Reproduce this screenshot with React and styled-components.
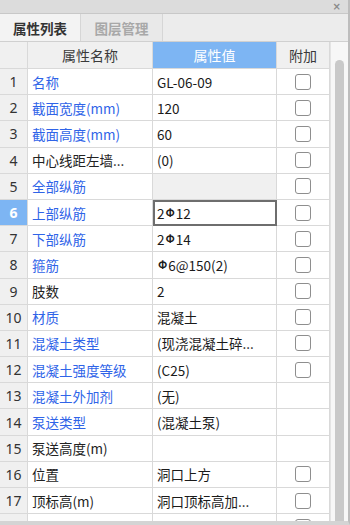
import React from "react";
import styled, { createGlobalStyle } from "styled-components";

const Global = createGlobalStyle`
  html, body { margin: 0; padding: 0; background: #ffffff; }
  body { font-family: "Noto Sans CJK SC", "Noto Sans", sans-serif; }
`;

const Frame = styled.div`
  width: 350px;
  height: 525px;
  display: flex;
  flex-direction: column;
  overflow: hidden;
  background: #ffffff;
  box-sizing: border-box;
  border-bottom: 4px solid #d4d4d4;
  border-right: 2px solid #bdbdbd;
`;

const TitleStrip = styled.div`
  height: 13px;
  flex: none;
  background: #dcdcdc;
  border-bottom: 1px solid #c8c8c8;
  display: flex;
  justify-content: flex-end;
  align-items: center;
  padding-right: 7px;
`;

const Close = styled.span`
  font-family: "DejaVu Sans", sans-serif;
  font-size: 10px;
  font-weight: bold;
  color: #8a8a8a;
  line-height: 1;
`;

const TabBar = styled.div`
  height: 27px;
  flex: none;
  display: flex;
  background: #ececec;
  border-bottom: 1px solid #d0d0d0;
`;

const Tab = styled.div`
  width: ${(p) => p.$w}px;
  display: flex;
  align-items: center;
  justify-content: center;
  font-size: 13.5px;
  font-weight: bold;
  color: ${(p) => (p.$active ? "#333333" : "#a8a8a8")};
  background: ${(p) => (p.$active ? "#f3f3f3" : "#e9e9e9")};
  border-right: 1px solid #d6d6d6;
  box-sizing: border-box;
`;

const Body = styled.div`
  flex: 1;
  display: flex;
  min-height: 0;
`;

const Table = styled.div`
  width: 330px;
  flex: none;
  display: grid;
  grid-template-columns: 28px 125px 124px 53px;
  grid-auto-rows: 26.2px;
  grid-template-rows: 27px;
  align-content: start;
  overflow: hidden;
`;

const Cell = styled.div`
  box-sizing: border-box;
  border-right: 1px solid #d9d9d9;
  border-bottom: 1px solid #d9d9d9;
  display: flex;
  align-items: center;
  font-size: 13.5px;
  white-space: nowrap;
  overflow: hidden;
  min-width: 0;
`;

const HeadCell = styled(Cell)`
  justify-content: center;
  background: ${(p) => (p.$hi ? "#7db5f3" : "#f0f0f0")};
  color: ${(p) => (p.$hi ? "#ffffff" : "#3a3a3a")};
  font-size: 14px;
`;

const NumCell = styled(Cell)`
  justify-content: center;
  background: ${(p) => (p.$sel ? "#7db5f3" : "#f0f0f0")};
  color: ${(p) => (p.$sel ? "#ffffff" : "#333333")};
  font-weight: ${(p) => (p.$sel ? "bold" : "normal")};
  font-family: "Noto Sans", "Noto Sans CJK SC", sans-serif;
  font-size: 14px;
`;

const NameCell = styled(Cell)`
  padding-left: 4px;
  color: ${(p) => (p.$blue ? "#2f64e8" : "#222222")};
`;

const ValueCell = styled(Cell)`
  padding-left: 4px;
  color: #1a1a1a;
  background: ${(p) => (p.$gray ? "#f0f0f0" : "#ffffff")};
  ${(p) =>
    p.$edit
      ? `outline: 2px solid #6e6e6e; outline-offset: -2px; padding-left: 4px;`
      : ""}
`;

const Rebar = styled.span`
  font-size: 11px;
  font-weight: bold;
  margin: 0 1px;
  position: relative;
  top: -1px;
`;

const ExtraCell = styled(Cell)`
  justify-content: center;
`;

const Check = styled.span`
  width: 16px;
  height: 16px;
  box-sizing: border-box;
  border: 1px solid #8e8e8e;
  border-radius: 3px;
  background: #ffffff;
`;

const ScrollTrack = styled.div`
  flex: 1;
  background: #f7f7f7;
  display: flex;
  justify-content: center;
  padding-top: 18px;
  border-left: 1px solid #e4e4e4;
`;

const Thumb = styled.div`
  width: 9px;
  height: 480px;
  border-radius: 5px 5px 0 0;
  background: #c9c9c9;
`;

const rows = [
  { n: 1, name: "名称", blue: true, value: "GL-06-09", check: true },
  { n: 2, name: "截面宽度(mm)", blue: true, value: "120", check: true },
  { n: 3, name: "截面高度(mm)", blue: true, value: "60", check: true },
  { n: 4, name: "中心线距左墙...", blue: false, value: "(0)", check: true },
  { n: 5, name: "全部纵筋", blue: true, value: "", gray: true, check: true },
  { n: 6, name: "上部纵筋", blue: true, rebar: ["2", "Φ", "12"], check: true, sel: true },
  { n: 7, name: "下部纵筋", blue: true, rebar: ["2", "Φ", "14"], check: true },
  { n: 8, name: "箍筋", blue: true, rebar: ["", "Φ", "6@150(2)"], check: true },
  { n: 9, name: "肢数", blue: false, value: "2", check: true },
  { n: 10, name: "材质", blue: true, value: "混凝土", check: true },
  { n: 11, name: "混凝土类型", blue: true, value: "(现浇混凝土碎...", check: true },
  { n: 12, name: "混凝土强度等级", blue: true, value: "(C25)", check: true },
  { n: 13, name: "混凝土外加剂", blue: true, value: "(无)", check: false },
  { n: 14, name: "泵送类型", blue: true, value: "(混凝土泵)", check: false },
  { n: 15, name: "泵送高度(m)", blue: false, value: "", check: false },
  { n: 16, name: "位置", blue: false, value: "洞口上方", check: true },
  { n: 17, name: "顶标高(m)", blue: false, value: "洞口顶标高加...", check: true },
  { n: 18, name: "起点伸入墙内...", blue: false, value: "250", check: true },
];

export default function App() {
  return (
    <>
      <Global />
      <Frame>
        <TitleStrip>
          <Close>×</Close>
        </TitleStrip>
        <TabBar>
          <Tab $active $w={81}>属性列表</Tab>
          <Tab $w={82}>图层管理</Tab>
        </TabBar>
        <Body>
          <Table>
            <HeadCell />
            <HeadCell>属性名称</HeadCell>
            <HeadCell $hi>属性值</HeadCell>
            <HeadCell>附加</HeadCell>
            {rows.map((r) => (
              <React.Fragment key={r.n}>
                <NumCell $sel={r.sel}>{r.n}</NumCell>
                <NameCell $blue={r.blue}>{r.name}</NameCell>
                <ValueCell $gray={r.gray} $edit={r.sel}>
                  {r.rebar ? (
                    <>
                      {r.rebar[0]}
                      <Rebar>{r.rebar[1]}</Rebar>
                      {r.rebar[2]}
                    </>
                  ) : (
                    r.value
                  )}
                </ValueCell>
                <ExtraCell>{r.check ? <Check /> : null}</ExtraCell>
              </React.Fragment>
            ))}
          </Table>
          <ScrollTrack>
            <Thumb />
          </ScrollTrack>
        </Body>
      </Frame>
    </>
  );
}
